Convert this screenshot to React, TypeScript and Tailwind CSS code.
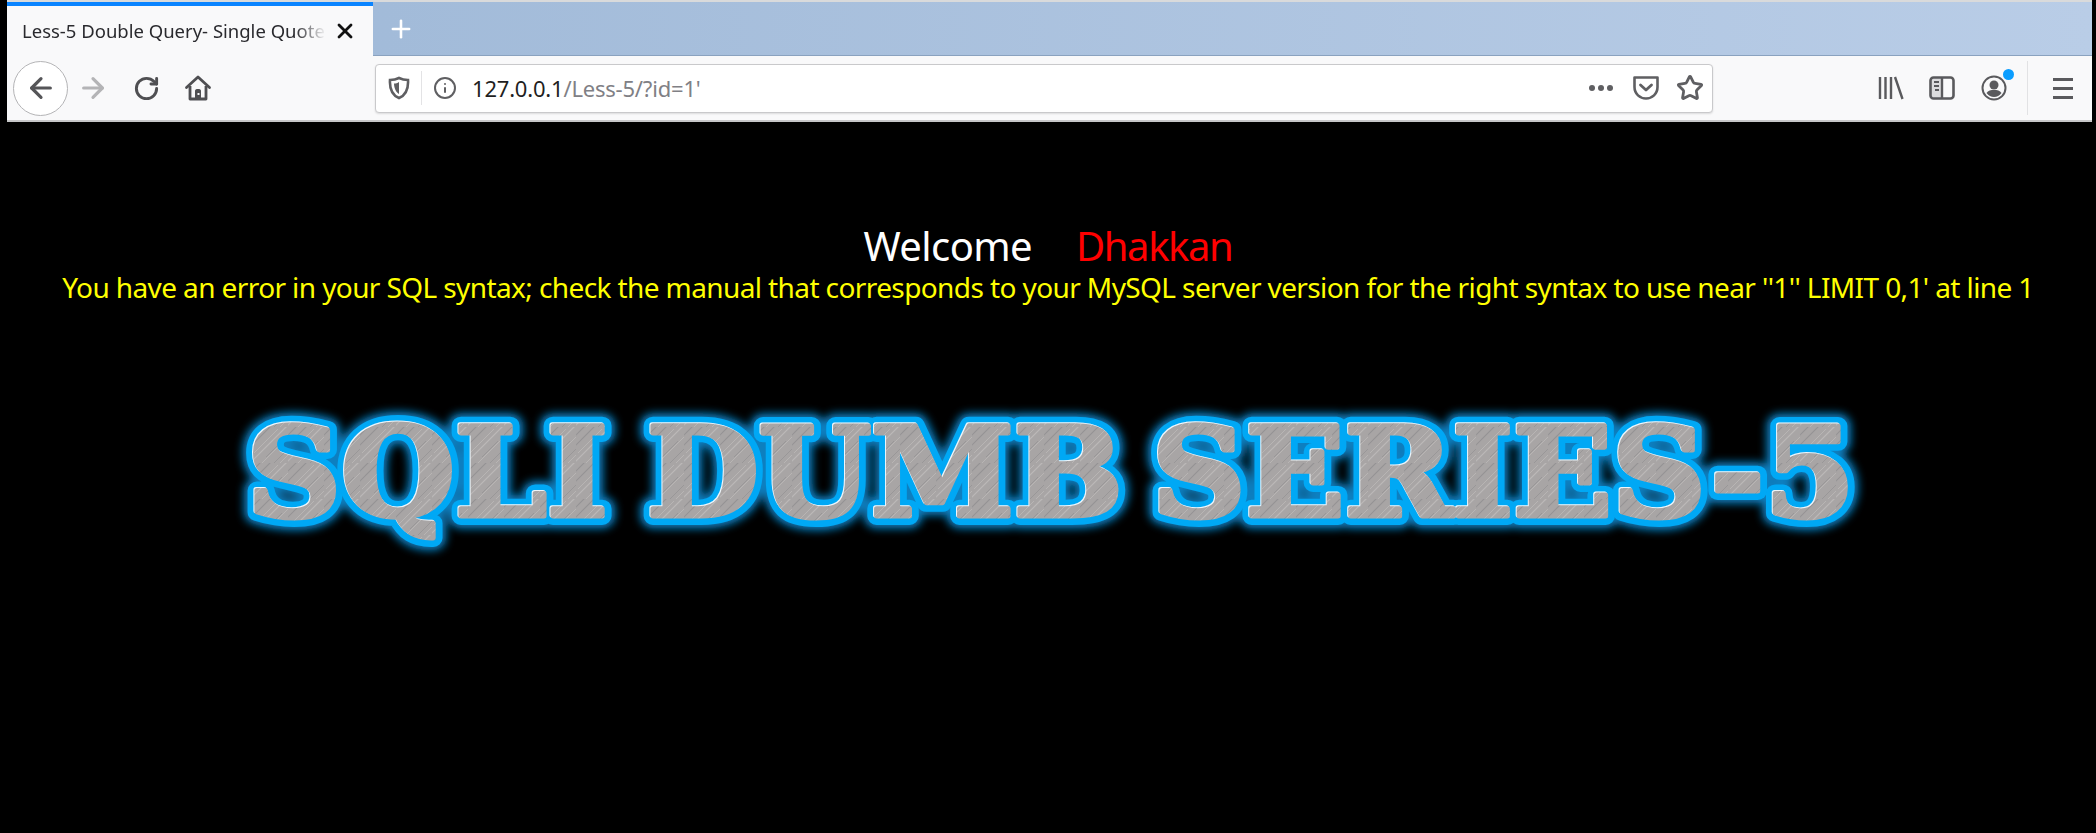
import React from "react";
import { ArrowLeft, ArrowRight, RotateCw, Info, Star, X, Plus } from "lucide-react";

const streaks = [
  "M-4 12 L12 -4",
  "M2 26 L26 2",
  "M14 30 L30 14",
  "M-2 36 L36 -2",
  "M20 38 L38 20",
  "M8 38 L38 8",
  "M-2 20 L20 -2",
  "M26 38 L38 26",
];

const words = [
  { text: "SQLI", x: 247, width: 361 },
  { text: "DUMB", x: 647, width: 476 },
  { text: "SERIES-5", x: 1152, width: 703 },
];

function Logo() {
  const lines = (props: React.SVGProps<SVGTextElement>) =>
    words.map((w) => (
      <text
        key={w.text}
        x={w.x}
        y={125}
        textLength={w.width}
        lengthAdjust="spacingAndGlyphs"
        fontFamily="'DejaVu Serif', serif"
        fontWeight={700}
        fontSize={124}
        strokeLinejoin="round"
        {...props}
      >
        {w.text}
      </text>
    ));

  return (
    <svg width="2096" height="180" viewBox="0 0 2096 180" className="block">
      <defs>
        <pattern id="brushed" width="36" height="36" patternUnits="userSpaceOnUse">
          <rect width="36" height="36" fill="#a8a5a5" />
          {streaks.map((d, i) => (
            <path
              key={d}
              d={d}
              stroke={i % 2 ? "#c6c3c2" : "#8a888b"}
              strokeWidth={i % 3 === 0 ? 1.2 : 0.8}
              opacity="0.65"
            />
          ))}
        </pattern>
        <filter id="glow" x="-10%" y="-40%" width="120%" height="180%">
          <feGaussianBlur stdDeviation="4" />
        </filter>
        <filter id="soft" x="-10%" y="-40%" width="120%" height="180%">
          <feGaussianBlur stdDeviation="0.7" />
        </filter>
      </defs>
      <g filter="url(#glow)">{lines({ fill: "#0a7fc0", stroke: "#0a7fc0", strokeWidth: 25 })}</g>
      <g filter="url(#soft)">{lines({ fill: "#00a8f5", stroke: "#00a8f5", strokeWidth: 18 })}</g>
      <g transform="translate(-1 -1)">{lines({ fill: "#eef6fb", stroke: "#eef6fb", strokeWidth: 5 })}</g>
      <g filter="url(#soft)">{lines({ fill: "url(#brushed)", stroke: "url(#brushed)", strokeWidth: 5 })}</g>
    </svg>
  );
}

function Shield() {
  return (
    <svg width="22" height="24" viewBox="0 0 22 24" fill="none">
      <path d="M11 2 C14 3.5 17 4 20 4 C20.5 12 18 19 11 22 C4 19 1.500 12 2 4 C5 4 8 3.500 11 2 Z" stroke="#5f5f62" strokeWidth="2.600" />
      <path d="M11 6 V18 C7.500 16 6 11 6 7.500 C8 7.500 9.500 7 11 6 Z" fill="#5f5f62" />
    </svg>
  );
}

function HomeIcon() {
  return (
    <svg width="28" height="28" viewBox="0 0 28 28" fill="none">
      <path d="M2.500 13.500 L14 3 L25.500 13.500" stroke="#4f4f52" strokeWidth="2.800" strokeLinecap="round" strokeLinejoin="round" />
      <path d="M6 12 V25 H22 V12" stroke="#4f4f52" strokeWidth="2.800" strokeLinejoin="round" />
      <path d="M11 25 V17 C11 15.500 12 15 14 15 C16 15 17 15.500 17 17 V25 Z" fill="#4f4f52" />
      <rect x="13.500" y="19" width="2" height="2" fill="#f9f9fa" />
    </svg>
  );
}

function Pocket() {
  return (
    <svg width="28" height="26" viewBox="0 0 28 26" fill="none">
      <path d="M2.500 2.500 H25.500 V12 C25.500 19 20 23.500 14 23.500 C8 23.500 2.500 19 2.500 12 Z" stroke="#5f5f62" strokeWidth="2.600" strokeLinejoin="round" />
      <path d="M8.500 10 L14 15 L19.500 10" stroke="#5f5f62" strokeWidth="2.800" strokeLinecap="round" strokeLinejoin="round" />
    </svg>
  );
}

function Library() {
  return (
    <svg width="26" height="26" viewBox="0 0 26 26" fill="none" stroke="#5a5a5d" strokeWidth="2.400">
      <path d="M2 2 V24 M7.500 2 V24 M13 2 V24 M17 2 L24.500 24" />
    </svg>
  );
}

function Sidebar() {
  return (
    <svg width="26" height="24" viewBox="0 0 26 24" fill="none">
      <rect x="1.500" y="1.500" width="23" height="21" rx="3" stroke="#5a5a5d" strokeWidth="2.600" />
      <path d="M1.500 4 A2.500 2.500 0 0 1 4 1.500 H13 V22.500 H4 A2.500 2.500 0 0 1 1.500 20 Z" fill="#5a5a5d" opacity="0.18" />
      <path d="M13 2 V22" stroke="#5a5a5d" strokeWidth="2.400" />
      <path d="M5 6 H10 M5 10 H10 M6 14 H10" stroke="#5a5a5d" strokeWidth="1.800" />
    </svg>
  );
}

function Account() {
  return (
    <div className="relative w-[26px] h-[26px]">
      <svg width="26" height="26" viewBox="0 0 26 26" fill="none">
        <circle cx="13" cy="13" r="11.500" stroke="#5a5a5d" strokeWidth="2" />
        <circle cx="13" cy="10" r="4.500" fill="#5a5a5d" />
        <path d="M5.500 18 C7 15.500 10 15 13 15 C16 15 19 15.500 20.500 18 C18.500 20.500 16 22 13 22 C10 22 7.500 20.500 5.500 18 Z" fill="#5a5a5d" />
      </svg>
      <span className="absolute top-[-6px] right-[-7px] w-[11px] h-[11px] rounded-full bg-[#0a9dff]" />
    </div>
  );
}

function Hamburger() {
  return (
    <div className="flex flex-col gap-[6px] w-[20px]">
      <span className="block h-[3px] bg-[#5a5a5d]" />
      <span className="block h-[3px] bg-[#5a5a5d]" />
      <span className="block h-[3px] bg-[#5a5a5d]" />
    </div>
  );
}

export default function App() {
  return (
    <div className="w-[2096px] h-[833px] overflow-hidden bg-black font-['Noto_Sans',sans-serif]">
      <div className="ml-[7px] mr-[4px]">
        <div className="h-[2px] bg-[#d9dadb]" />
        {/* tab strip */}
        <div className="flex h-[54px] items-stretch bg-gradient-to-r from-[#9db7d6] to-[#b9cde7] border-b border-[#8aa2bf]">
          <div className="relative w-[366px] h-[54px] flex items-center bg-[#f9f9fa] border-t-[4px] border-[#0a84ff]">
            <div className="ml-[15px] w-[304px] whitespace-nowrap text-[18.5px] text-[#2a2a2e] [mask-image:linear-gradient(to_right,black_90%,transparent)]">
              Less-5 Double Query- Single Quote
            </div>
            <X size={24} strokeWidth={2.800} color="#111111" className="ml-[7px]" />
          </div>
          <div className="flex items-center ml-[14px]">
            <Plus size={28} strokeWidth={2.200} color="#ffffff" />
          </div>
        </div>
        {/* nav bar */}
        <div className="flex h-[66px] items-center bg-[#f9f9fa] border-b-2 border-[#c6c6c8]">
          <div className="ml-[6px] w-[55px] h-[55px] rounded-full bg-white border border-[#b4b4b6] flex items-center justify-center">
            <ArrowLeft size={32} strokeWidth={2.400} color="#555558" />
          </div>
          <ArrowRight size={32} strokeWidth={2.400} color="#b4b4b6" className="ml-[9px]" />
          <RotateCw size={27} strokeWidth={2.600} color="#4f4f52" className="ml-[24px]" />
          <div className="ml-[24px]"><HomeIcon /></div>

          <div className="ml-[163px] w-[1338px] h-[49px] flex items-center bg-white border border-[#c9c9cb] rounded-[4px] shadow-[0_1px_2px_rgba(0,0,0,0.12)]">
            <div className="ml-[12px]"><Shield /></div>
            <div className="ml-[11px] w-px h-[34px] bg-[#e3e3e5]" />
            <Info size={24} strokeWidth={2} color="#5f5f62" className="ml-[11px]" />
            <div className="ml-[15px] text-[22px] tracking-[-0.2px] whitespace-nowrap">
              <span className="text-[#1f1f22]">127.0.0.1</span>
              <span className="text-[#808085]">/Less-5/?id=1'</span>
            </div>
            <div className="ml-auto flex items-center">
              <div className="flex gap-[3px]">
                <span className="w-[6px] h-[6px] rounded-full bg-[#5f5f62]" />
                <span className="w-[6px] h-[6px] rounded-full bg-[#5f5f62]" />
                <span className="w-[6px] h-[6px] rounded-full bg-[#5f5f62]" />
              </div>
              <div className="ml-[19px]"><Pocket /></div>
              <Star size={28} strokeWidth={2.400} color="#5f5f62" className="ml-[16px] mr-[8px]" />
            </div>
          </div>

          <div className="ml-[165px]"><Library /></div>
          <div className="ml-[25px]"><Sidebar /></div>
          <div className="ml-[26px]"><Account /></div>
          <div className="ml-[20px] w-px h-[54px] bg-[#e2e2e4]" />
          <div className="ml-[25px]"><Hamburger /></div>
        </div>
      </div>

      <div className="pt-[100px] text-center">
        <div className="text-[40px] leading-[48px] whitespace-nowrap">
          <span className="text-white tracking-[-0.6px]">Welcome</span>
          <span className="ml-[44px] text-[#ff0000] tracking-[-1.4px]">Dhakkan</span>
        </div>
        <div className="text-[28px] leading-[34px] tracking-[-0.6px] text-[#ffff00] whitespace-nowrap">
          You have an error in your SQL syntax; check the manual that corresponds to your MySQL server version for the right syntax to use near ''1'' LIMIT 0,1' at line 1
        </div>
      </div>
      <div className="mt-[87px]">
        <Logo />
      </div>
    </div>
  );
}
